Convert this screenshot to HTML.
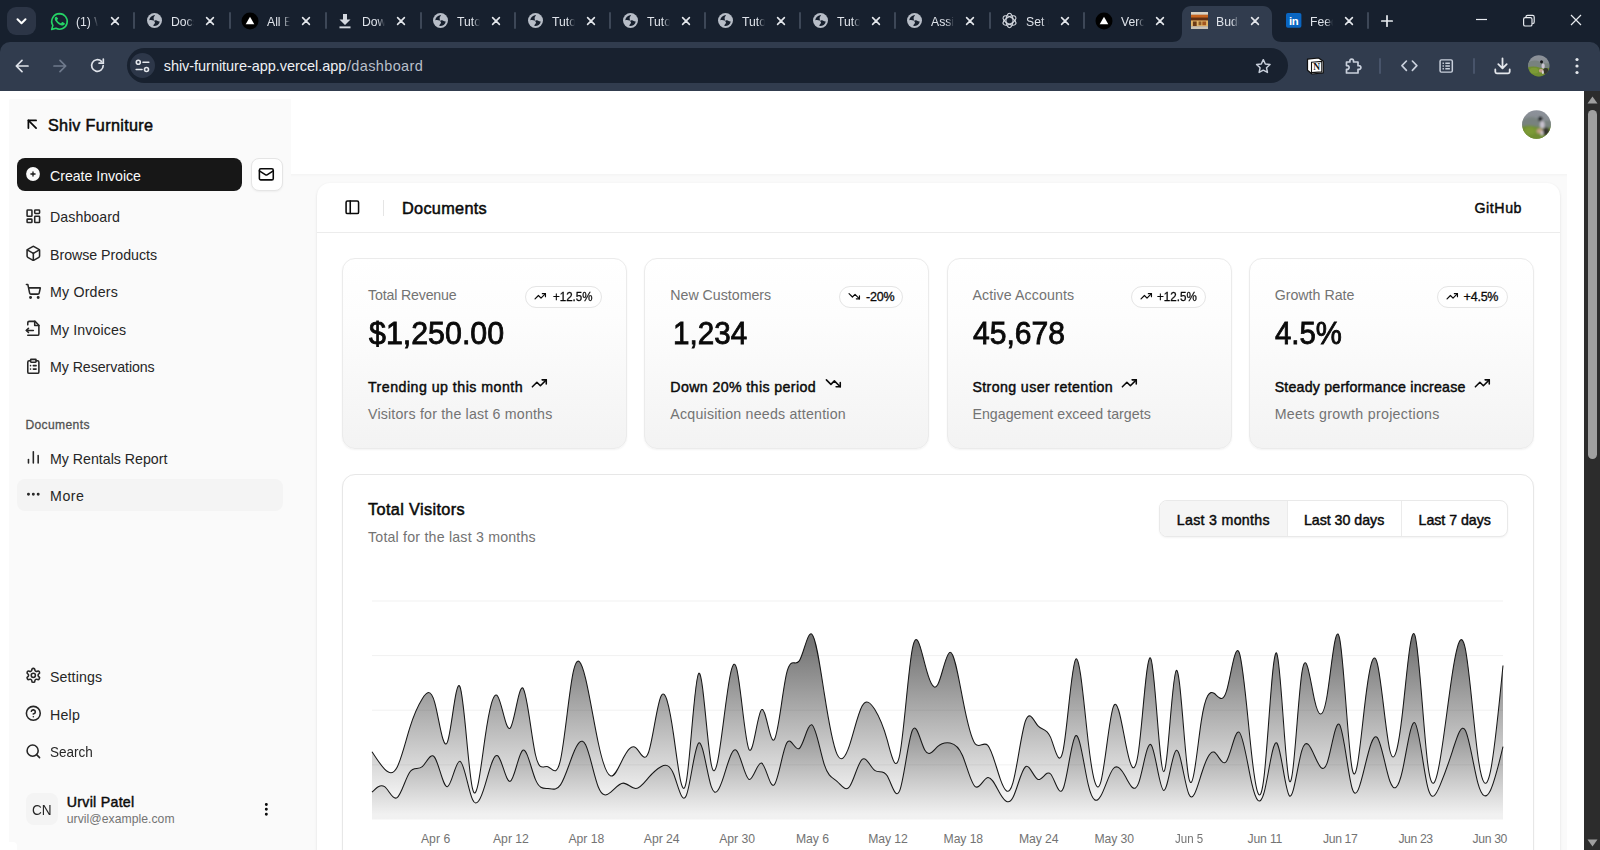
<!DOCTYPE html>
<html lang="en">
<head>
<meta charset="utf-8">
<title>Shiv Furniture - Dashboard</title>
<style>
*{box-sizing:border-box;margin:0;padding:0}
html,body{width:1600px;height:850px;overflow:hidden;background:#fff}
body{position:relative;font-family:"Liberation Sans",sans-serif;color:#0a0a0a;-webkit-font-smoothing:antialiased}
.abs{position:absolute}
.t{position:absolute;white-space:nowrap;line-height:1;transform-origin:0 0}
svg{position:absolute;overflow:visible}
/* ---------- browser chrome ---------- */
#strip{position:absolute;left:0;top:0;width:1600px;height:60px;background:#17202e}
#toolbar{position:absolute;left:0;top:41.500px;width:1600px;height:49px;background:#313c4e;border-radius:10px 10px 0 0}
#pill{position:absolute;left:127px;top:48px;width:1161px;height:35px;border-radius:18px;background:#18212f}
#pillbtn{position:absolute;left:130px;top:53px;width:25px;height:25px;border-radius:13px;background:#2d3749}
#tabsearch{position:absolute;left:7px;top:7px;width:29px;height:28px;border-radius:9px;background:#2c3546}
.tabsep{position:absolute;top:12px;width:2px;height:17px;border-radius:1px;background:#3d4757}
.tabtxt{position:absolute;top:13.500px;font-size:12.200px;line-height:16px;color:#dfe3ea;white-space:nowrap;overflow:hidden;width:23px;-webkit-mask-image:linear-gradient(90deg,#000 68%,transparent 100%);mask-image:linear-gradient(90deg,#000 68%,transparent 100%)}
.tsep{position:absolute;top:58px;width:2px;height:16px;border-radius:1px;background:#48546a}
.card{top:257.500px;width:285.300px;height:191.500px;border-radius:13px;border:1px solid #ebebeb;background:linear-gradient(180deg,#fff 0%,#fdfdfd 30%,#f3f3f3 100%);box-shadow:0 1px 2px rgba(0,0,0,.05)}
.badge{top:285.500px;height:22px;border-radius:11px;border:1px solid #e5e5e5;background:rgba(255,255,255,.6)}
</style>
</head>
<body>
<!-- browser chrome -->
<div id="strip"></div><div id="toolbar"></div>
<svg style="left:1172px;top:6px" width="110" height="36" viewBox="0 0 110 36"><path d="M0 36c6 0 10-3 10-10V9c0-5 3.500-9 9-9h72c5.500 0 9 4 9 9v17c0 7 4 10 10 10z" fill="#313c4e"/></svg>
<div id="tabsearch"></div><svg style="left:16px;top:18px" width="11" height="7" viewBox="0 0 11 7"><path d="M1.500 1.300l4 4 4-4" stroke="#fff" stroke-width="2" fill="none" stroke-linecap="round" stroke-linejoin="round"/></svg>
<svg style="left:49.500px;top:11.500px" width="19" height="19" viewBox="0 0 20 20"><path d="M10 1.700a8.200 8.200 0 0 0-7 12.400L1.800 18.300l4.400-1.100A8.200 8.200 0 1 0 10 1.700z" fill="none" stroke="#25d366" stroke-width="1.700" stroke-linejoin="round"/><path d="M7.300 5.600c-.3-.6-.5-.6-.8-.6-.7 0-1.500.8-1.500 2 0 1.300.9 2.500 1.100 2.700.1.200 1.800 2.900 4.500 3.900 2.200.9 2.600.7 3.100.6.500 0 1.500-.6 1.700-1.200.2-.6.200-1.100.2-1.200-.1-.1-.3-.2-.6-.3l-1.800-.9c-.3-.1-.5-.1-.7.200l-.8 1c-.1.200-.3.200-.6.100-.3-.2-1.100-.4-2.100-1.300-.8-.7-1.300-1.600-1.500-1.800-.1-.3 0-.4.100-.6l.5-.5c.1-.2.200-.3.300-.5.100-.2 0-.4 0-.5z" fill="#25d366"/></svg>
<div class="tabtxt" style="left:76px;width:22px">(1) W</div>
<svg style="left:110px;top:16px" width="10" height="10" viewBox="0 0 10 10"><path d="M1.600 1.600l6.800 6.800M8.400 1.600l-6.800 6.800" stroke="#e4e7ec" stroke-width="1.600" stroke-linecap="round" fill="none"/></svg>
<div class="tabsep" style="left:133px"></div>
<svg style="left:146.6px;top:13.2px" width="15" height="15" viewBox="0 0 15 15"><circle cx="7.500" cy="7.500" r="7.500" fill="#b7bdc7"/><path d="M7.900 2C5.400 2.200 2.700 4 2.200 7.300c1.700-.700 3.200-.300 4.500.400.700-1.100-.400-2.100 0-3.300.300-.900 1.200-1.500 1.200-2.400zM6.900 7.900c1.500 1 1.300 2.200.400 3-.700.700-1.100 1.400-.800 2.100 2.600.400 5.700-1.400 6.300-4.600-1.400.200-2.400-.200-3.100-.800-.800-.600-2-.400-2.800.300z" fill="#17202e"/></svg>
<div class="tabtxt" style="left:171px;width:23px">Docs</div>
<svg style="left:205px;top:16px" width="10" height="10" viewBox="0 0 10 10"><path d="M1.600 1.600l6.800 6.800M8.400 1.600l-6.800 6.800" stroke="#e4e7ec" stroke-width="1.600" stroke-linecap="round" fill="none"/></svg>
<svg style="left:241px;top:12px" width="18" height="18" viewBox="0 0 18 18"><circle cx="9" cy="9" r="8.500" fill="#000"/><path d="M9 4.800l4.300 7.400H4.700z" fill="#fff"/></svg>
<div class="tabtxt" style="left:267px;width:23px">All Ev</div>
<svg style="left:301px;top:16px" width="10" height="10" viewBox="0 0 10 10"><path d="M1.600 1.600l6.800 6.800M8.400 1.600l-6.800 6.800" stroke="#e4e7ec" stroke-width="1.600" stroke-linecap="round" fill="none"/></svg>
<svg style="left:338px;top:13px" width="14" height="16" viewBox="0 0 14 16"><path d="M5 1h4v5.500h3.500L7 12 1.500 6.500H5z" fill="#d5d9e0"/><rect x="1.500" y="13.400" width="11" height="1.900" fill="#d5d9e0"/></svg>
<div class="tabtxt" style="left:362px;width:23px">Down</div>
<svg style="left:396px;top:16px" width="10" height="10" viewBox="0 0 10 10"><path d="M1.600 1.600l6.800 6.800M8.400 1.600l-6.800 6.800" stroke="#e4e7ec" stroke-width="1.600" stroke-linecap="round" fill="none"/></svg>
<svg style="left:432.6px;top:13.2px" width="15" height="15" viewBox="0 0 15 15"><circle cx="7.500" cy="7.500" r="7.500" fill="#b7bdc7"/><path d="M7.900 2C5.400 2.200 2.700 4 2.200 7.300c1.700-.700 3.200-.300 4.500.400.700-1.100-.400-2.100 0-3.300.300-.900 1.200-1.500 1.200-2.400zM6.900 7.900c1.500 1 1.300 2.200.400 3-.700.700-1.100 1.400-.800 2.100 2.600.400 5.700-1.400 6.300-4.600-1.400.200-2.400-.200-3.100-.800-.800-.600-2-.400-2.800.300z" fill="#17202e"/></svg>
<div class="tabtxt" style="left:457px;width:23px">Tuto</div>
<svg style="left:491px;top:16px" width="10" height="10" viewBox="0 0 10 10"><path d="M1.600 1.600l6.800 6.800M8.400 1.600l-6.800 6.800" stroke="#e4e7ec" stroke-width="1.600" stroke-linecap="round" fill="none"/></svg>
<svg style="left:527.6px;top:13.2px" width="15" height="15" viewBox="0 0 15 15"><circle cx="7.500" cy="7.500" r="7.500" fill="#b7bdc7"/><path d="M7.900 2C5.400 2.200 2.700 4 2.200 7.300c1.700-.700 3.200-.300 4.500.400.700-1.100-.400-2.100 0-3.300.300-.900 1.200-1.500 1.200-2.400zM6.900 7.900c1.500 1 1.300 2.200.400 3-.700.700-1.100 1.400-.800 2.100 2.600.400 5.700-1.400 6.300-4.600-1.400.200-2.400-.200-3.100-.800-.800-.600-2-.400-2.800.300z" fill="#17202e"/></svg>
<div class="tabtxt" style="left:552px;width:23px">Tuto</div>
<svg style="left:586px;top:16px" width="10" height="10" viewBox="0 0 10 10"><path d="M1.600 1.600l6.800 6.800M8.400 1.600l-6.800 6.800" stroke="#e4e7ec" stroke-width="1.600" stroke-linecap="round" fill="none"/></svg>
<svg style="left:622.6px;top:13.2px" width="15" height="15" viewBox="0 0 15 15"><circle cx="7.500" cy="7.500" r="7.500" fill="#b7bdc7"/><path d="M7.900 2C5.400 2.200 2.700 4 2.200 7.300c1.700-.700 3.200-.300 4.500.400.700-1.100-.400-2.100 0-3.300.300-.900 1.200-1.500 1.200-2.400zM6.900 7.900c1.500 1 1.300 2.200.400 3-.700.700-1.100 1.400-.800 2.100 2.600.400 5.700-1.400 6.300-4.600-1.400.200-2.400-.200-3.100-.800-.800-.600-2-.400-2.800.300z" fill="#17202e"/></svg>
<div class="tabtxt" style="left:647px;width:23px">Tuto</div>
<svg style="left:681px;top:16px" width="10" height="10" viewBox="0 0 10 10"><path d="M1.600 1.600l6.800 6.800M8.400 1.600l-6.800 6.800" stroke="#e4e7ec" stroke-width="1.600" stroke-linecap="round" fill="none"/></svg>
<svg style="left:717.6px;top:13.2px" width="15" height="15" viewBox="0 0 15 15"><circle cx="7.500" cy="7.500" r="7.500" fill="#b7bdc7"/><path d="M7.900 2C5.400 2.200 2.700 4 2.200 7.300c1.700-.700 3.200-.300 4.500.400.700-1.100-.400-2.100 0-3.300.300-.900 1.200-1.500 1.200-2.400zM6.900 7.900c1.500 1 1.300 2.200.400 3-.700.700-1.100 1.400-.800 2.100 2.600.400 5.700-1.400 6.300-4.600-1.400.200-2.400-.200-3.100-.800-.800-.600-2-.400-2.800.300z" fill="#17202e"/></svg>
<div class="tabtxt" style="left:742px;width:23px">Tuto</div>
<svg style="left:776px;top:16px" width="10" height="10" viewBox="0 0 10 10"><path d="M1.600 1.600l6.800 6.800M8.400 1.600l-6.800 6.800" stroke="#e4e7ec" stroke-width="1.600" stroke-linecap="round" fill="none"/></svg>
<svg style="left:812.6px;top:13.2px" width="15" height="15" viewBox="0 0 15 15"><circle cx="7.500" cy="7.500" r="7.500" fill="#b7bdc7"/><path d="M7.900 2C5.400 2.200 2.700 4 2.200 7.300c1.700-.700 3.200-.300 4.500.400.700-1.100-.400-2.100 0-3.300.300-.900 1.200-1.500 1.200-2.400zM6.900 7.900c1.500 1 1.300 2.200.400 3-.700.700-1.100 1.400-.800 2.100 2.600.400 5.700-1.400 6.300-4.600-1.400.200-2.400-.200-3.100-.800-.800-.600-2-.400-2.800.300z" fill="#17202e"/></svg>
<div class="tabtxt" style="left:837px;width:23px">Tuto</div>
<svg style="left:871px;top:16px" width="10" height="10" viewBox="0 0 10 10"><path d="M1.600 1.600l6.800 6.800M8.400 1.600l-6.800 6.800" stroke="#e4e7ec" stroke-width="1.600" stroke-linecap="round" fill="none"/></svg>
<svg style="left:906.6px;top:13.2px" width="15" height="15" viewBox="0 0 15 15"><circle cx="7.500" cy="7.500" r="7.500" fill="#b7bdc7"/><path d="M7.900 2C5.400 2.200 2.700 4 2.200 7.300c1.700-.700 3.200-.300 4.500.400.700-1.100-.400-2.100 0-3.300.300-.900 1.200-1.500 1.200-2.400zM6.900 7.900c1.500 1 1.300 2.200.400 3-.700.700-1.100 1.400-.800 2.100 2.600.400 5.700-1.400 6.300-4.600-1.400.200-2.400-.200-3.100-.800-.800-.600-2-.400-2.800.300z" fill="#17202e"/></svg>
<div class="tabtxt" style="left:931px;width:23px">Assig</div>
<svg style="left:965px;top:16px" width="10" height="10" viewBox="0 0 10 10"><path d="M1.600 1.600l6.800 6.800M8.400 1.600l-6.800 6.800" stroke="#e4e7ec" stroke-width="1.600" stroke-linecap="round" fill="none"/></svg>
<svg style="left:1000.5px;top:12.300px" width="17" height="17" viewBox="0 0 18 18" fill="none" stroke="#d5d9e0" stroke-width="1.150"><ellipse cx="9" cy="9" rx="7.600" ry="3.700" transform="rotate(30 9 9)"/><ellipse cx="9" cy="9" rx="7.600" ry="3.700" transform="rotate(90 9 9)"/><ellipse cx="9" cy="9" rx="7.600" ry="3.700" transform="rotate(150 9 9)"/></svg>
<div class="tabtxt" style="left:1026px;width:23px">Set up</div>
<svg style="left:1060px;top:16px" width="10" height="10" viewBox="0 0 10 10"><path d="M1.600 1.600l6.800 6.800M8.400 1.600l-6.800 6.800" stroke="#e4e7ec" stroke-width="1.600" stroke-linecap="round" fill="none"/></svg>
<svg style="left:1095px;top:12px" width="18" height="18" viewBox="0 0 18 18"><circle cx="9" cy="9" r="8.500" fill="#000"/><path d="M9 4.800l4.300 7.400H4.700z" fill="#fff"/></svg>
<div class="tabtxt" style="left:1121px;width:23px">Verce</div>
<svg style="left:1155px;top:16px" width="10" height="10" viewBox="0 0 10 10"><path d="M1.600 1.600l6.800 6.800M8.400 1.600l-6.800 6.800" stroke="#e4e7ec" stroke-width="1.600" stroke-linecap="round" fill="none"/></svg>
<svg style="left:1190.5px;top:12.200px" width="17" height="17" viewBox="0 0 18 18"><rect x="0" y="0" width="18" height="18" fill="#8a4b22"/><rect x="0" y="0" width="18" height="3" fill="#d9d2c4"/><rect x="0" y="3" width="18" height="3" fill="#c8641e"/><rect x="0" y="6" width="18" height="3" fill="#5e2f14"/><rect x="0" y="9" width="18" height="6" fill="#e2b66a"/><rect x="2" y="10" width="4" height="5" fill="#6b3a17"/><rect x="8" y="10" width="3" height="4" fill="#8c5a2a"/><rect x="12" y="10" width="4" height="4" fill="#a2551f"/><rect x="0" y="15" width="18" height="3" fill="#c9c2b6"/></svg>
<div class="tabtxt" style="left:1216px;width:23px">Budg</div>
<svg style="left:1250px;top:16px" width="10" height="10" viewBox="0 0 10 10"><path d="M1.600 1.600l6.800 6.800M8.400 1.600l-6.800 6.800" stroke="#e4e7ec" stroke-width="1.600" stroke-linecap="round" fill="none"/></svg>
<svg style="left:1285.7px;top:13.400px" width="15.400" height="14.800" viewBox="0 0 17 17" preserveAspectRatio="none"><rect width="17" height="17" rx="2" fill="#0a66c2"/><text x="8.500" y="13.600" text-anchor="middle" font-family="Liberation Sans, sans-serif" font-weight="700" font-size="12.500" fill="#fff" letter-spacing="-0.300">in</text></svg>
<div class="tabtxt" style="left:1310px;width:23px">Feed</div>
<svg style="left:1344px;top:16px" width="10" height="10" viewBox="0 0 10 10"><path d="M1.600 1.600l6.800 6.800M8.400 1.600l-6.800 6.800" stroke="#e4e7ec" stroke-width="1.600" stroke-linecap="round" fill="none"/></svg>
<div class="tabsep" style="left:229px"></div>
<div class="tabsep" style="left:325px"></div>
<div class="tabsep" style="left:420px"></div>
<div class="tabsep" style="left:514px"></div>
<div class="tabsep" style="left:609px"></div>
<div class="tabsep" style="left:704px"></div>
<div class="tabsep" style="left:799px"></div>
<div class="tabsep" style="left:894px"></div>
<div class="tabsep" style="left:989px"></div>
<div class="tabsep" style="left:1083px"></div>
<div class="tabsep" style="left:1367px"></div>
<svg style="left:1381px;top:15px" width="12" height="12" viewBox="0 0 12 12"><path d="M6 .800v10.400M.800 6h10.400" stroke="#e8ebf0" stroke-width="1.700" stroke-linecap="round"/></svg>
<svg style="left:1476px;top:14px" width="110" height="14" viewBox="0 0 110 14" fill="none" stroke="#e8ebf0" stroke-width="1.200"><path d="M0 5.500h11"/><rect x="47.600" y="3.600" width="8.400" height="8.400" rx="1.600"/><path d="M50 3.400V2.900c0-1 .600-1.600 1.600-1.600h5c1 0 1.600.6 1.600 1.600v5c0 1-.6 1.600-1.600 1.600h-.4"/><path d="M95 1l10 10M105 1L95 11"/></svg>
<svg style="left:14px;top:58px" width="16" height="16" viewBox="0 0 16 16" fill="none" stroke="#dfe3ea" stroke-width="1.700" stroke-linecap="round" stroke-linejoin="round"><path d="M14 8H2.500M8 2.300L2.300 8 8 13.700"/></svg>
<svg style="left:52px;top:58px" width="16" height="16" viewBox="0 0 16 16" fill="none" stroke="#6f7a8c" stroke-width="1.700" stroke-linecap="round" stroke-linejoin="round"><path d="M2 8h11.500M8 2.300L13.700 8 8 13.700"/></svg>
<svg style="left:89px;top:57px" width="17" height="17" viewBox="0 0 17 17" fill="none" stroke="#dfe3ea" stroke-width="1.700" stroke-linecap="round" stroke-linejoin="round"><path d="M14.200 8.500a5.800 5.800 0 1 1-1.700-4.100"/><path d="M14.300 2v4.200h-4.200" stroke-linejoin="miter"/></svg>
<div id="pill"></div><div id="pillbtn"></div>
<svg style="left:135px;top:59px" width="15" height="14" viewBox="0 0 15 14" fill="none" stroke="#e4e7ec" stroke-width="1.600" stroke-linecap="round"><circle cx="3.300" cy="3.300" r="2"/><path d="M8 3.300h5.800"/><circle cx="11.500" cy="10.500" r="2"/><path d="M1.200 10.500H7"/></svg>
<svg style="left:1254.900px;top:57.800px" width="16.600" height="16.600" viewBox="0 0 18 18" fill="none" stroke="#c9d0dc" stroke-width="1.600" stroke-linejoin="round"><path d="M9 1.800l2.200 4.700 5.100.6-3.800 3.500 1 5.100L9 13.200l-4.500 2.500 1-5.100-3.800-3.500 5.100-.6z"/></svg>
<svg style="left:1306px;top:57px" width="19" height="18" viewBox="0 0 19 18"><path d="M1.500 2.200L12.500 1l4.800 3.200v11.600L6 17l-4.500-3.800z" fill="#fff" stroke="#111" stroke-width="1.200" stroke-linejoin="round"/><path d="M5.500 5.200L15.800 4.400v10.500L5.500 15.600z" fill="#fff" stroke="#111" stroke-width="1.100"/><text x="10.700" y="13.300" text-anchor="middle" font-family="Liberation Serif, serif" font-weight="700" font-size="9.500" fill="#111">N</text></svg>
<svg style="left:1343.500px;top:56.700px" width="19" height="18" viewBox="0 0 19 18" fill="none" stroke="#c9d0dc" stroke-width="1.700" stroke-linejoin="round"><path d="M2.500 5h3.400c-.300-1.900.500-2.900 1.800-2.900s2.100 1 1.800 2.900h4.500v3.700c1.900-.300 2.900.500 2.900 1.800s-1 2.100-2.900 1.800V16H2.500v-3.700c1.700.300 2.600-.500 2.600-1.800s-.900-2.100-2.600-1.800z"/></svg>
<div class="tsep" style="left:1379px"></div><div class="tsep" style="left:1473px"></div>
<svg style="left:1400.500px;top:60.300px" width="16.800" height="11.400" viewBox="0 0 18 12" fill="none" stroke="#c9d0dc" stroke-width="1.800" stroke-linecap="round" stroke-linejoin="round"><path d="M5.800 1L1 6l4.800 5M12.200 1L17 6l-4.800 5"/></svg>
<svg style="left:1439px;top:59px" width="14.400" height="14" viewBox="0 0 16 16" fill="none" stroke="#c9d0dc" stroke-width="1.700"><rect x="1" y="1" width="14" height="14" rx="1.500"/><path d="M3.800 4.800h1.600M7 4.800h5.200M3.800 8h1.600M7 8h5.200M3.800 11.200h1.600M7 11.200h5.200" stroke-width="1.700"/></svg>
<svg style="left:1494px;top:57px" width="17" height="18" viewBox="0 0 17 18" fill="none" stroke="#e4e7ec" stroke-width="1.800" stroke-linecap="round" stroke-linejoin="round"><path d="M8.500 1.500v9.500M4.300 7.200l4.200 4.200 4.200-4.200M1.300 12.500v2.300c0 .9.600 1.500 1.500 1.500h11.400c.9 0 1.500-.6 1.500-1.500v-2.300"/></svg>
<svg style="left:1528.2px;top:55.2px" width="21.6" height="21.6" viewBox="0 0 29 29"><defs><clipPath id="tavc"><circle cx="14.500" cy="14.500" r="14.300"/></clipPath><linearGradient id="tavg" x1="0" y1="0" x2="0" y2="1"><stop offset="0" stop-color="#8d929b"/><stop offset=".35" stop-color="#878d92"/><stop offset=".5" stop-color="#7b857c"/><stop offset=".62" stop-color="#6f8a33"/><stop offset="1" stop-color="#64802a"/></linearGradient><filter id="tavb" x="-20%" y="-20%" width="140%" height="140%"><feGaussianBlur stdDeviation=".9"/></filter></defs><g clip-path="url(#tavc)"><rect width="29" height="29" fill="url(#tavg)"/><g filter="url(#tavb)"><path d="M-2 12C4 7 10 6 16 9s10 3 15 1v8H-2z" fill="#78827f"/><path d="M-2 17c6-2 12-2 18 0 5 1.500 9 1 14 0v14H-2z" fill="#6f8d30"/><ellipse cx="8" cy="21" rx="6" ry="4" fill="#7c9a36"/><ellipse cx="24" cy="21.500" rx="3.600" ry="4" fill="#34352f"/><ellipse cx="20.300" cy="14.800" rx="2.200" ry="3.800" fill="#cbc4d2"/><ellipse cx="17.600" cy="21" rx="3" ry="2.600" fill="#c2a088"/><ellipse cx="20" cy="23" rx="1.300" ry="2.600" fill="#d8d0d4"/><ellipse cx="18.200" cy="9.200" rx="2" ry="2.100" fill="#17171b"/></g></g></svg>
<svg style="left:1575px;top:57px" width="4" height="18" viewBox="0 0 4 18" fill="#e4e7ec"><circle cx="2" cy="2.500" r="1.600"/><circle cx="2" cy="9" r="1.600"/><circle cx="2" cy="15.500" r="1.600"/></svg>
<!-- page -->
<div class="abs" style="left:9px;top:99px;width:282px;height:90px;background:#fafafa;border-radius:2px 0 0 0"></div>
<div class="abs" style="left:9px;top:174px;width:1558px;height:680px;background:#fafafa;box-shadow:inset 0 3px 3px -2px rgba(0,0,0,.035)"></div>
<div class="abs" style="left:9px;top:174px;width:282px;height:8px;background:#fafafa"></div>
<div class="abs" style="left:317px;top:182.500px;width:1242.500px;height:700px;background:#fff;border-radius:13px;box-shadow:0 1px 3px rgba(0,0,0,.10),0 1px 2px -1px rgba(0,0,0,.10)"></div>
<div class="abs" style="left:317px;top:231.500px;width:1242.500px;height:1px;background:#ececec"></div>
<svg style="left:1521.8px;top:109.9px" width="29" height="29" viewBox="0 0 29 29"><defs><clipPath id="pavc"><circle cx="14.500" cy="14.500" r="14.300"/></clipPath><linearGradient id="pavg" x1="0" y1="0" x2="0" y2="1"><stop offset="0" stop-color="#8d929b"/><stop offset=".35" stop-color="#878d92"/><stop offset=".5" stop-color="#7b857c"/><stop offset=".62" stop-color="#6f8a33"/><stop offset="1" stop-color="#64802a"/></linearGradient><filter id="pavb" x="-20%" y="-20%" width="140%" height="140%"><feGaussianBlur stdDeviation=".9"/></filter></defs><g clip-path="url(#pavc)"><rect width="29" height="29" fill="url(#pavg)"/><g filter="url(#pavb)"><path d="M-2 12C4 7 10 6 16 9s10 3 15 1v8H-2z" fill="#78827f"/><path d="M-2 17c6-2 12-2 18 0 5 1.500 9 1 14 0v14H-2z" fill="#6f8d30"/><ellipse cx="8" cy="21" rx="6" ry="4" fill="#7c9a36"/><ellipse cx="24" cy="21.500" rx="3.600" ry="4" fill="#34352f"/><ellipse cx="20.300" cy="14.800" rx="2.200" ry="3.800" fill="#cbc4d2"/><ellipse cx="17.600" cy="21" rx="3" ry="2.600" fill="#c2a088"/><ellipse cx="20" cy="23" rx="1.300" ry="2.600" fill="#d8d0d4"/><ellipse cx="18.200" cy="9.200" rx="2" ry="2.100" fill="#17171b"/></g></g></svg>
<div class="abs" style="left:1584.200px;top:90.500px;width:15.800px;height:760px;background:#2c2c2c"></div>
<div class="abs" style="left:1587.500px;top:110px;width:9.500px;height:349px;border-radius:5px;background:#9f9f9f"></div>
<svg style="left:1587px;top:96px" width="11" height="8" viewBox="0 0 11 8"><path d="M5.500 .500L10.500 7.500H.500z" fill="#9f9f9f"/></svg>
<svg style="left:1587px;top:838.500px" width="11" height="8" viewBox="0 0 11 8"><path d="M5.500 7.500L10.500 .500H.500z" fill="#9f9f9f"/></svg>
<div class="abs" style="left:8px;top:841.500px;width:8.500px;height:9px;background:#fff;border-radius:0 4px 0 0"></div>
<div class="abs" style="left:17px;top:157.500px;width:224.700px;height:33.300px;border-radius:8px;background:#171717"></div>
<div class="abs" style="left:250.500px;top:158px;width:32.500px;height:32.500px;border-radius:8px;background:#fff;border:1px solid #e5e5e5;box-shadow:0 1px 2px rgba(0,0,0,.05)"></div>
<div class="abs" style="left:17px;top:478.700px;width:265.700px;height:32.500px;border-radius:8px;background:#f4f4f4"></div>
<div class="abs" style="left:25.500px;top:792.700px;width:32.500px;height:32.500px;border-radius:8px;background:#f4f4f4"></div>
<div class="abs card" style="left:342px"></div>
<div class="abs card" style="left:644.2px"></div>
<div class="abs card" style="left:946.6px"></div>
<div class="abs card" style="left:1248.6px"></div>
<div class="abs badge" style="left:525px;width:76.7px"></div>
<div class="abs badge" style="left:839.1px;width:64.4px"></div>
<div class="abs badge" style="left:1130.6px;width:75.1px"></div>
<div class="abs badge" style="left:1436.8px;width:71.2px"></div>
<div class="abs" style="left:342px;top:473.700px;width:1192px;height:400px;border-radius:13px;background:#fff;border:1px solid #e7e7e7;box-shadow:0 1px 2px rgba(0,0,0,.05)"></div>
<div class="abs" style="left:1159.300px;top:500.400px;width:348.700px;height:37px;border-radius:8px;background:#fff;border:1px solid #e9e9e9;box-shadow:0 1px 2px rgba(0,0,0,.05);overflow:hidden"><div style="position:absolute;left:0;top:0;width:127.600px;height:100%;background:#f5f5f5;border-right:1px solid #ebebeb"></div><div style="position:absolute;left:241.100px;top:0;width:1px;height:100%;background:#ebebeb"></div></div>
<div class="t" style="left:163.7px;top:59.0px;font-size:14.5px;font-weight:400;color:#eef0f4;letter-spacing:-0.042px">shiv-furniture-app.vercel.app</div>
<div class="t" style="left:346.9px;top:59.0px;font-size:14.5px;font-weight:400;color:#b9bfca;letter-spacing:0.371px">/dashboard</div>
<div class="t" style="left:48.0px;top:117.1px;font-size:16.2px;font-weight:400;color:#0a0a0a;-webkit-text-stroke:0.50px #0a0a0a;letter-spacing:0.326px">Shiv Furniture</div>
<div class="t" style="left:50.0px;top:168.8px;font-size:14.2px;font-weight:400;color:#fafafa;letter-spacing:-0.037px">Create Invoice</div>
<div class="t" style="left:50.0px;top:210.0px;font-size:14.2px;font-weight:400;color:#262626;letter-spacing:0.072px">Dashboard</div>
<div class="t" style="left:50.0px;top:247.5px;font-size:14.2px;font-weight:400;color:#262626;letter-spacing:-0.018px">Browse Products</div>
<div class="t" style="left:50.0px;top:285.0px;font-size:14.2px;font-weight:400;color:#262626;letter-spacing:0.198px">My Orders</div>
<div class="t" style="left:50.0px;top:322.5px;font-size:14.2px;font-weight:400;color:#262626;letter-spacing:0.109px">My Invoices</div>
<div class="t" style="left:50.0px;top:360.0px;font-size:14.2px;font-weight:400;color:#262626;letter-spacing:-0.068px">My Reservations</div>
<div class="t" style="left:25.4px;top:418.8px;font-size:12.1px;font-weight:400;color:#525252;-webkit-text-stroke:0.29px #525252;letter-spacing:0.366px">Documents</div>
<div class="t" style="left:50.0px;top:451.5px;font-size:14.2px;font-weight:400;color:#262626;letter-spacing:-0.005px">My Rentals Report</div>
<div class="t" style="left:50.0px;top:488.9px;font-size:14.2px;font-weight:400;color:#262626;letter-spacing:0.557px">More</div>
<div class="t" style="left:50.0px;top:670.3px;font-size:14.2px;font-weight:400;color:#262626;letter-spacing:0.105px">Settings</div>
<div class="t" style="left:50.0px;top:707.7px;font-size:14.2px;font-weight:400;color:#262626;letter-spacing:0.204px">Help</div>
<div class="t" style="left:50.0px;top:745.1px;font-size:14.2px;font-weight:400;color:#262626;transform:scaleX(0.9521)">Search</div>
<div class="t" style="left:31.7px;top:803.4px;font-size:14.2px;font-weight:400;color:#262626;transform:scaleX(0.9610)">CN</div>
<div class="t" style="left:66.8px;top:794.7px;font-size:14.2px;font-weight:400;color:#0a0a0a;-webkit-text-stroke:0.44px #0a0a0a;letter-spacing:0.274px">Urvil Patel</div>
<div class="t" style="left:66.8px;top:812.7px;font-size:12.2px;font-weight:400;color:#737373;letter-spacing:0.037px">urvil@example.com</div>
<div class="t" style="left:402.0px;top:200.1px;font-size:16.3px;font-weight:400;color:#0a0a0a;-webkit-text-stroke:0.51px #0a0a0a;letter-spacing:0.293px">Documents</div>
<div class="t" style="left:1474.5px;top:201.4px;font-size:14.2px;font-weight:400;color:#0a0a0a;-webkit-text-stroke:0.44px #0a0a0a;letter-spacing:0.569px">GitHub</div>
<div class="t" style="left:368.0px;top:287.5px;font-size:14.2px;font-weight:400;color:#737373;letter-spacing:-0.167px">Total Revenue</div>
<div class="t" style="left:552.5px;top:291.3px;font-size:12.5px;font-weight:400;color:#0a0a0a;-webkit-text-stroke:0.30px #0a0a0a;transform:scaleX(0.9240)">+12.5%</div>
<div class="t" style="left:368.6px;top:317.7px;font-size:31.1px;font-weight:400;color:#0a0a0a;-webkit-text-stroke:0.84px #0a0a0a;transform:scaleX(0.9767)">$1,250.00</div>
<div class="t" style="left:368.0px;top:379.6px;font-size:14.2px;font-weight:400;color:#0a0a0a;-webkit-text-stroke:0.44px #0a0a0a;letter-spacing:0.476px">Trending up this month</div>
<div class="t" style="left:368.0px;top:406.9px;font-size:14.2px;font-weight:400;color:#737373;letter-spacing:0.191px">Visitors for the last 6 months</div>
<div class="t" style="left:670.3px;top:287.5px;font-size:14.2px;font-weight:400;color:#737373;letter-spacing:-0.002px">New Customers</div>
<div class="t" style="left:866.0px;top:291.3px;font-size:12.5px;font-weight:400;color:#0a0a0a;-webkit-text-stroke:0.30px #0a0a0a;letter-spacing:-0.229px">-20%</div>
<div class="t" style="left:672.5px;top:317.7px;font-size:31.1px;font-weight:400;color:#0a0a0a;-webkit-text-stroke:0.84px #0a0a0a;transform:scaleX(0.9536)">1,234</div>
<div class="t" style="left:670.3px;top:379.6px;font-size:14.2px;font-weight:400;color:#0a0a0a;-webkit-text-stroke:0.44px #0a0a0a;letter-spacing:0.383px">Down 20% this period</div>
<div class="t" style="left:670.3px;top:406.9px;font-size:14.2px;font-weight:400;color:#737373;letter-spacing:0.224px">Acquisition needs attention</div>
<div class="t" style="left:972.4px;top:287.5px;font-size:14.2px;font-weight:400;color:#737373;letter-spacing:0.117px">Active Accounts</div>
<div class="t" style="left:1156.8px;top:291.3px;font-size:12.5px;font-weight:400;color:#0a0a0a;-webkit-text-stroke:0.30px #0a0a0a;transform:scaleX(0.9310)">+12.5%</div>
<div class="t" style="left:973.0px;top:317.7px;font-size:31.1px;font-weight:400;color:#0a0a0a;-webkit-text-stroke:0.84px #0a0a0a;transform:scaleX(0.9673)">45,678</div>
<div class="t" style="left:972.4px;top:379.6px;font-size:14.2px;font-weight:400;color:#0a0a0a;-webkit-text-stroke:0.44px #0a0a0a;letter-spacing:0.390px">Strong user retention</div>
<div class="t" style="left:972.4px;top:406.9px;font-size:14.2px;font-weight:400;color:#737373;letter-spacing:0.039px">Engagement exceed targets</div>
<div class="t" style="left:1274.7px;top:287.5px;font-size:14.2px;font-weight:400;color:#737373;letter-spacing:0.006px">Growth Rate</div>
<div class="t" style="left:1463.6px;top:291.3px;font-size:12.5px;font-weight:400;color:#0a0a0a;-webkit-text-stroke:0.30px #0a0a0a;letter-spacing:-0.224px">+4.5%</div>
<div class="t" style="left:1275.3px;top:317.7px;font-size:31.1px;font-weight:400;color:#0a0a0a;-webkit-text-stroke:0.84px #0a0a0a;transform:scaleX(0.9439)">4.5%</div>
<div class="t" style="left:1274.7px;top:379.6px;font-size:14.2px;font-weight:400;color:#0a0a0a;-webkit-text-stroke:0.44px #0a0a0a;letter-spacing:0.207px">Steady performance increase</div>
<div class="t" style="left:1274.7px;top:406.9px;font-size:14.2px;font-weight:400;color:#737373;letter-spacing:0.304px">Meets growth projections</div>
<div class="t" style="left:368.0px;top:501.0px;font-size:16.3px;font-weight:400;color:#0a0a0a;-webkit-text-stroke:0.51px #0a0a0a;letter-spacing:0.354px">Total Visitors</div>
<div class="t" style="left:368.0px;top:529.7px;font-size:14.2px;font-weight:400;color:#737373;letter-spacing:0.202px">Total for the last 3 months</div>
<div class="t" style="left:1176.8px;top:512.6px;font-size:14.2px;font-weight:400;color:#0a0a0a;-webkit-text-stroke:0.44px #0a0a0a;letter-spacing:0.306px">Last 3 months</div>
<div class="t" style="left:1303.9px;top:512.6px;font-size:14.2px;font-weight:400;color:#0a0a0a;-webkit-text-stroke:0.44px #0a0a0a;letter-spacing:-0.005px">Last 30 days</div>
<div class="t" style="left:1418.6px;top:512.6px;font-size:14.2px;font-weight:400;color:#0a0a0a;-webkit-text-stroke:0.44px #0a0a0a;letter-spacing:-0.036px">Last 7 days</div>
<div class="t" style="left:420.9px;top:832.9px;font-size:12.2px;font-weight:400;color:#737373;letter-spacing:0.040px">Apr 6</div>
<div class="t" style="left:493.0px;top:832.9px;font-size:12.2px;font-weight:400;color:#737373;letter-spacing:-0.014px">Apr 12</div>
<div class="t" style="left:568.4px;top:832.9px;font-size:12.2px;font-weight:400;color:#737373;letter-spacing:-0.014px">Apr 18</div>
<div class="t" style="left:643.8px;top:832.9px;font-size:12.2px;font-weight:400;color:#737373;letter-spacing:-0.014px">Apr 24</div>
<div class="t" style="left:719.2px;top:832.9px;font-size:12.2px;font-weight:400;color:#737373;letter-spacing:-0.014px">Apr 30</div>
<div class="t" style="left:796.0px;top:832.9px;font-size:12.2px;font-weight:400;color:#737373;letter-spacing:-0.051px">May 6</div>
<div class="t" style="left:868.2px;top:832.9px;font-size:12.2px;font-weight:400;color:#737373;letter-spacing:-0.084px">May 12</div>
<div class="t" style="left:943.6px;top:832.9px;font-size:12.2px;font-weight:400;color:#737373;letter-spacing:-0.084px">May 18</div>
<div class="t" style="left:1019.0px;top:832.9px;font-size:12.2px;font-weight:400;color:#737373;letter-spacing:-0.084px">May 24</div>
<div class="t" style="left:1094.4px;top:832.9px;font-size:12.2px;font-weight:400;color:#737373;letter-spacing:-0.084px">May 30</div>
<div class="t" style="left:1175.4px;top:832.9px;font-size:12.2px;font-weight:400;color:#737373;transform:scaleX(0.9454)">Jun 5</div>
<div class="t" style="left:1247.6px;top:832.9px;font-size:12.2px;font-weight:400;color:#737373;letter-spacing:-0.188px">Jun 11</div>
<div class="t" style="left:1323.0px;top:832.9px;font-size:12.2px;font-weight:400;color:#737373;letter-spacing:-0.369px">Jun 17</div>
<div class="t" style="left:1398.4px;top:832.9px;font-size:12.2px;font-weight:400;color:#737373;letter-spacing:-0.369px">Jun 23</div>
<div class="t" style="left:1472.6px;top:832.9px;font-size:12.2px;font-weight:400;color:#737373;letter-spacing:-0.369px">Jun 30</div>
<!-- icons -->
<svg style="left:22.55px;top:114.75px" width="18.5" height="18.5" viewBox="0 0 24 24" fill="none" stroke="#0a0a0a" stroke-width="2.25" stroke-linecap="round" stroke-linejoin="round"><path d="M7 17V7h10"/><path d="M17 17 7 7"/></svg>
<svg style="left:26.400px;top:167.300px" width="14" height="14" viewBox="0 0 14 14"><circle cx="7" cy="7" r="6.900" fill="#fafafa"/><path d="M7 4.900v4.200M4.900 7h4.200" stroke="#171717" stroke-width="1.300" stroke-linecap="round"/></svg>
<svg style="left:258.17px;top:165.86px" width="16.67" height="16.67" viewBox="0 0 24 24" fill="none" stroke="#0a0a0a" stroke-width="2.25" stroke-linecap="round" stroke-linejoin="round"><rect width="20" height="16" x="2" y="4" rx="2"/><path d="m22 7-8.970 5.700a1.940 1.940 0 0 1-2.060 0L2 7"/></svg>
<svg style="left:24.96px;top:207.81px" width="16.67" height="16.67" viewBox="0 0 24 24" fill="none" stroke="#262626" stroke-width="2.25" stroke-linecap="round" stroke-linejoin="round"><rect width="7" height="9" x="3" y="3" rx="1"/><rect width="7" height="5" x="14" y="3" rx="1"/><rect width="7" height="9" x="14" y="12" rx="1"/><rect width="7" height="5" x="3" y="16" rx="1"/></svg>
<svg style="left:24.96px;top:245.31px" width="16.67" height="16.67" viewBox="0 0 24 24" fill="none" stroke="#262626" stroke-width="2.25" stroke-linecap="round" stroke-linejoin="round"><path d="M21 8a2 2 0 0 0-1-1.730l-7-4a2 2 0 0 0-2 0l-7 4A2 2 0 0 0 3 8v8a2 2 0 0 0 1 1.730l7 4a2 2 0 0 0 2 0l7-4A2 2 0 0 0 21 16Z"/><path d="m3.300 7 8.700 5 8.700-5"/><path d="M12 22V12"/></svg>
<svg style="left:24.96px;top:282.81px" width="16.67" height="16.67" viewBox="0 0 24 24" fill="none" stroke="#262626" stroke-width="2.25" stroke-linecap="round" stroke-linejoin="round"><circle cx="8" cy="21" r="1"/><circle cx="19" cy="21" r="1"/><path d="M2.050 2.050h2l2.660 12.420a2 2 0 0 0 2 1.580h9.780a2 2 0 0 0 1.950-1.570l1.650-7.430H5.120"/></svg>
<svg style="left:24.96px;top:320.31px" width="16.67" height="16.67" viewBox="0 0 24 24" fill="none" stroke="#262626" stroke-width="2.25" stroke-linecap="round" stroke-linejoin="round"><path d="M4 7V4a2 2 0 0 1 2-2h8.500L20 7.500V20a2 2 0 0 1-2 2H4"/><polyline points="14 2 14 8 20 8"/><path d="M2 15h10"/><path d="m5 12-3 3 3 3"/></svg>
<svg style="left:24.96px;top:357.81px" width="16.67" height="16.67" viewBox="0 0 24 24" fill="none" stroke="#262626" stroke-width="2.25" stroke-linecap="round" stroke-linejoin="round"><rect width="8" height="4" x="8" y="2" rx="1" ry="1"/><path d="M16 4h2a2 2 0 0 1 2 2v14a2 2 0 0 1-2 2H6a2 2 0 0 1-2-2V6a2 2 0 0 1 2-2h2"/><path d="M12 11h4"/><path d="M12 16h4"/><path d="M8 11h.01"/><path d="M8 16h.01"/></svg>
<svg style="left:24.96px;top:448.81px" width="16.67" height="16.67" viewBox="0 0 24 24" fill="none" stroke="#262626" stroke-width="2.25" stroke-linecap="round" stroke-linejoin="round"><path d="M5 20v-5"/><path d="M12 20V4"/><path d="M19 20V9.500"/></svg>
<svg style="left:24.96px;top:486.31px" width="16.67" height="16.67" viewBox="0 0 24 24" fill="none" stroke="#262626" stroke-width="2.25" stroke-linecap="round" stroke-linejoin="round" ><circle cx="5" cy="12" r="1"/><circle cx="12" cy="12" r="1"/><circle cx="19" cy="12" r="1"/></svg>
<svg style="left:24.96px;top:667.37px" width="16.67" height="16.67" viewBox="0 0 24 24" fill="none" stroke="#262626" stroke-width="2.25" stroke-linecap="round" stroke-linejoin="round"><path d="M12.220 2h-.440a2 2 0 0 0-2 2v.180a2 2 0 0 1-1 1.730l-.430.250a2 2 0 0 1-2 0l-.150-.080a2 2 0 0 0-2.730.730l-.220.380a2 2 0 0 0 .730 2.730l.150.100a2 2 0 0 1 1 1.720v.510a2 2 0 0 1-1 1.740l-.150.090a2 2 0 0 0-.730 2.730l.220.380a2 2 0 0 0 2.730.730l.150-.080a2 2 0 0 1 2 0l.430.250a2 2 0 0 1 1 1.730V20a2 2 0 0 0 2 2h.440a2 2 0 0 0 2-2v-.180a2 2 0 0 1 1-1.730l.430-.250a2 2 0 0 1 2 0l.150.080a2 2 0 0 0 2.730-.730l.220-.390a2 2 0 0 0-.730-2.730l-.150-.080a2 2 0 0 1-1-1.740v-.500a2 2 0 0 1 1-1.740l.150-.090a2 2 0 0 0 .730-2.730l-.220-.380a2 2 0 0 0-2.730-.730l-.150.080a2 2 0 0 1-2 0l-.430-.250a2 2 0 0 1-1-1.730V4a2 2 0 0 0-2-2z"/><circle cx="12" cy="12" r="3"/></svg>
<svg style="left:24.96px;top:704.87px" width="16.67" height="16.67" viewBox="0 0 24 24" fill="none" stroke="#262626" stroke-width="2.25" stroke-linecap="round" stroke-linejoin="round"><circle cx="12" cy="12" r="10"/><path d="M9.090 9a3 3 0 0 1 5.830 1c0 2-3 3-3 3"/><path d="M12 17h.01"/></svg>
<svg style="left:24.96px;top:742.56px" width="16.67" height="16.67" viewBox="0 0 24 24" fill="none" stroke="#262626" stroke-width="2.25" stroke-linecap="round" stroke-linejoin="round"><circle cx="11" cy="11" r="8"/><path d="m21 21-4.300-4.300"/></svg>
<svg style="left:258.27px;top:800.56px" width="16.67" height="16.67" viewBox="0 0 24 24" fill="none" stroke="#0a0a0a" stroke-width="2.25" stroke-linecap="round" stroke-linejoin="round"><circle cx="12" cy="5" r="1"/><circle cx="12" cy="12" r="1"/><circle cx="12" cy="19" r="1"/></svg>
<svg style="left:344.17px;top:199.41px" width="16.67" height="16.67" viewBox="0 0 24 24" fill="none" stroke="#0a0a0a" stroke-width="2.25" stroke-linecap="round" stroke-linejoin="round"><rect width="18" height="18" x="3" y="3" rx="2"/><path d="M9 3v18"/></svg>
<div class="abs" style="left:382.500px;top:200px;width:1px;height:16px;background:#e5e5e5"></div>
<svg style="left:534.25px;top:290.45px" width="12.5" height="12.5" viewBox="0 0 24 24" fill="none" stroke="#0a0a0a" stroke-width="2.25" stroke-linecap="round" stroke-linejoin="round"><polyline points="22 7 13.5 15.5 8.5 10.5 2 17"/><polyline points="16 7 22 7 22 13"/></svg>
<svg style="left:848.35px;top:290.45px" width="12.5" height="12.5" viewBox="0 0 24 24" fill="none" stroke="#0a0a0a" stroke-width="2.25" stroke-linecap="round" stroke-linejoin="round"><polyline points="22 17 13.5 8.5 8.5 13.5 2 7"/><polyline points="16 17 22 17 22 11"/></svg>
<svg style="left:1139.75px;top:290.45px" width="12.5" height="12.5" viewBox="0 0 24 24" fill="none" stroke="#0a0a0a" stroke-width="2.25" stroke-linecap="round" stroke-linejoin="round"><polyline points="22 7 13.5 15.5 8.5 10.5 2 17"/><polyline points="16 7 22 7 22 13"/></svg>
<svg style="left:1446.25px;top:290.45px" width="12.5" height="12.5" viewBox="0 0 24 24" fill="none" stroke="#0a0a0a" stroke-width="2.25" stroke-linecap="round" stroke-linejoin="round"><polyline points="22 7 13.5 15.5 8.5 10.5 2 17"/><polyline points="16 7 22 7 22 13"/></svg>
<svg style="left:531.06px;top:374.97px" width="16.67" height="16.67" viewBox="0 0 24 24" fill="none" stroke="#0a0a0a" stroke-width="2.25" stroke-linecap="round" stroke-linejoin="round"><polyline points="22 7 13.5 15.5 8.5 10.5 2 17"/><polyline points="16 7 22 7 22 13"/></svg>
<svg style="left:824.66px;top:374.97px" width="16.67" height="16.67" viewBox="0 0 24 24" fill="none" stroke="#0a0a0a" stroke-width="2.25" stroke-linecap="round" stroke-linejoin="round"><polyline points="22 17 13.5 8.5 8.5 13.5 2 7"/><polyline points="16 17 22 17 22 11"/></svg>
<svg style="left:1120.96px;top:374.97px" width="16.67" height="16.67" viewBox="0 0 24 24" fill="none" stroke="#0a0a0a" stroke-width="2.25" stroke-linecap="round" stroke-linejoin="round"><polyline points="22 7 13.5 15.5 8.5 10.5 2 17"/><polyline points="16 7 22 7 22 13"/></svg>
<svg style="left:1474.37px;top:374.97px" width="16.67" height="16.67" viewBox="0 0 24 24" fill="none" stroke="#0a0a0a" stroke-width="2.25" stroke-linecap="round" stroke-linejoin="round"><polyline points="22 7 13.5 15.5 8.5 10.5 2 17"/><polyline points="16 7 22 7 22 13"/></svg>

<!-- chart -->
<svg style="left:0;top:0" width="1600" height="850" viewBox="0 0 1600 850">
<defs><linearGradient id="fillDesktop" x1="0" y1="0" x2="0" y2="1"><stop offset="5%" stop-color="#171717" stop-opacity="1"/><stop offset="95%" stop-color="#171717" stop-opacity=".1"/></linearGradient><linearGradient id="fillMobile" x1="0" y1="0" x2="0" y2="1"><stop offset="5%" stop-color="#171717" stop-opacity=".8"/><stop offset="95%" stop-color="#171717" stop-opacity=".1"/></linearGradient></defs>
<line x1="372.0" x2="1503.0" y1="601.0" y2="601.0" stroke="#f1f1f1" stroke-width="1"/>
<line x1="372.0" x2="1503.0" y1="655.6" y2="655.6" stroke="#f1f1f1" stroke-width="1"/>
<line x1="372.0" x2="1503.0" y1="710.2" y2="710.2" stroke="#f1f1f1" stroke-width="1"/>
<line x1="372.0" x2="1503.0" y1="764.9" y2="764.9" stroke="#f1f1f1" stroke-width="1"/>
<path d="M372.0,792.2C376.2,787.9,380.4,783.6,384.6,786.7C388.8,789.9,392.9,800.6,397.1,797.6C401.3,794.7,405.5,778.3,409.7,772.2C413.9,766.1,418.1,770.4,422.3,766.7C426.5,763.0,430.6,751.4,434.8,757.6C439.0,763.7,443.2,787.6,447.4,786.7C451.6,785.8,455.8,760.1,460.0,761.2C464.2,762.4,468.3,790.4,472.5,799.5C476.7,808.6,480.9,798.8,485.1,784.9C489.3,771.0,493.5,752.8,497.7,755.8C501.9,758.7,506.0,782.7,510.2,781.3C514.4,779.8,518.6,752.9,522.8,750.3C527.0,747.7,531.2,769.3,535.4,779.4C539.6,789.6,543.7,788.2,547.9,788.5C552.1,788.9,556.3,791.0,560.5,784.9C564.7,778.8,568.9,764.5,573.1,754.0C577.3,743.4,581.4,736.7,585.6,744.8C589.8,753.0,594.0,776.0,598.2,786.7C602.4,797.4,606.6,795.8,610.8,792.2C615.0,788.6,619.1,783.1,623.3,783.1C627.5,783.1,631.7,788.7,635.9,788.5C640.1,788.4,644.3,782.5,648.5,777.6C652.7,772.8,656.8,769.0,661.0,766.7C665.2,764.4,669.4,763.7,673.6,774.0C677.8,784.2,682.0,805.4,686.2,795.8C690.4,786.3,694.5,746.0,698.7,743.0C702.9,740.1,707.1,774.5,711.3,786.7C715.5,798.9,719.7,788.9,723.9,775.8C728.1,762.7,732.2,746.6,736.4,750.3C740.6,754.0,744.8,777.6,749.0,779.4C753.2,781.2,757.4,761.2,761.6,763.1C765.8,764.9,769.9,788.5,774.1,784.9C778.3,781.3,782.5,750.4,786.7,743.0C790.9,735.6,795.1,751.6,799.3,748.5C803.5,745.4,807.6,723.1,811.8,724.8C816.0,726.5,820.2,752.1,824.4,764.9C828.6,777.7,832.8,777.6,837.0,781.3C841.2,784.9,845.3,792.2,849.5,786.7C853.7,781.2,857.9,763.0,862.1,759.4C866.3,755.9,870.5,767.1,874.7,770.3C878.9,773.6,883.0,768.9,887.2,775.8C891.4,782.7,895.6,801.2,899.8,790.4C904.0,779.5,908.2,739.4,912.4,730.3C916.6,721.1,920.7,743.0,924.9,750.3C929.1,757.7,933.3,750.5,937.5,746.7C941.7,742.8,945.9,742.3,950.1,743.0C954.3,743.8,958.4,745.8,962.6,755.8C966.8,765.7,971.0,783.6,975.2,786.7C979.4,789.9,983.6,778.4,987.8,777.6C992.0,776.9,996.1,786.8,1000.3,794.0C1004.5,801.2,1008.7,805.5,1012.9,797.6C1017.1,789.8,1021.3,769.6,1025.5,766.7C1029.7,763.8,1033.8,778.0,1038.0,779.4C1042.2,780.9,1046.4,769.6,1050.6,774.0C1054.8,778.4,1059.0,798.5,1063.2,788.5C1067.4,778.6,1071.5,738.6,1075.7,735.7C1079.9,732.9,1084.1,767.3,1088.3,784.9C1092.5,802.5,1096.7,803.2,1100.9,795.8C1105.1,788.5,1109.2,773.1,1113.4,768.5C1117.6,763.9,1121.8,770.0,1126.0,777.6C1130.2,785.2,1134.4,794.3,1138.6,783.1C1142.8,771.9,1146.9,740.4,1151.1,744.8C1155.3,749.3,1159.5,789.7,1163.7,790.4C1167.9,791.0,1172.1,752.0,1176.3,750.3C1180.5,748.6,1184.6,784.3,1188.8,794.0C1193.0,803.7,1197.2,787.3,1201.4,774.0C1205.6,760.7,1209.8,750.5,1214.0,752.1C1218.2,753.8,1222.3,767.2,1226.5,761.2C1230.7,755.2,1234.9,729.7,1239.1,732.1C1243.3,734.5,1247.5,764.8,1251.7,783.1C1255.9,801.4,1260.0,807.7,1264.2,792.2C1268.4,776.7,1272.6,739.3,1276.8,743.0C1281.0,746.8,1285.2,791.6,1289.4,795.8C1293.6,800.1,1297.7,763.7,1301.9,750.3C1306.1,736.9,1310.3,746.3,1314.5,755.8C1318.7,765.2,1322.9,774.6,1327.1,763.1C1331.3,751.5,1335.4,718.9,1339.6,724.8C1343.8,730.8,1348.0,775.2,1352.2,788.5C1356.4,801.9,1360.6,784.0,1364.8,766.7C1369.0,749.3,1373.1,732.5,1377.3,737.6C1381.5,742.6,1385.7,769.7,1389.9,781.3C1394.1,792.8,1398.3,788.9,1402.5,770.3C1406.7,751.7,1410.8,718.5,1415.0,723.0C1419.2,727.5,1423.4,769.9,1427.6,786.7C1431.8,803.6,1436.0,795.0,1440.2,784.9C1444.4,774.8,1448.5,763.4,1452.7,750.3C1456.9,737.3,1461.1,722.6,1465.3,730.3C1469.5,737.9,1473.7,767.8,1477.9,783.1C1482.1,798.3,1486.2,798.9,1490.4,790.4C1494.6,781.9,1498.8,764.3,1503.0,746.7L1503.0,819.5L372.0,819.5Z" fill="url(#fillMobile)" fill-opacity=".6"/>
<path d="M372.0,792.2C376.2,787.9,380.4,783.6,384.6,786.7C388.8,789.9,392.9,800.6,397.1,797.6C401.3,794.7,405.5,778.3,409.7,772.2C413.9,766.1,418.1,770.4,422.3,766.7C426.5,763.0,430.6,751.4,434.8,757.6C439.0,763.7,443.2,787.6,447.4,786.7C451.6,785.8,455.8,760.1,460.0,761.2C464.2,762.4,468.3,790.4,472.5,799.5C476.7,808.6,480.9,798.8,485.1,784.9C489.3,771.0,493.5,752.8,497.7,755.8C501.9,758.7,506.0,782.7,510.2,781.3C514.4,779.8,518.6,752.9,522.8,750.3C527.0,747.7,531.2,769.3,535.4,779.4C539.6,789.6,543.7,788.2,547.9,788.5C552.1,788.9,556.3,791.0,560.5,784.9C564.7,778.8,568.9,764.5,573.1,754.0C577.3,743.4,581.4,736.7,585.6,744.8C589.8,753.0,594.0,776.0,598.2,786.7C602.4,797.4,606.6,795.8,610.8,792.2C615.0,788.6,619.1,783.1,623.3,783.1C627.5,783.1,631.7,788.7,635.9,788.5C640.1,788.4,644.3,782.5,648.5,777.6C652.7,772.8,656.8,769.0,661.0,766.7C665.2,764.4,669.4,763.7,673.6,774.0C677.8,784.2,682.0,805.4,686.2,795.8C690.4,786.3,694.5,746.0,698.7,743.0C702.9,740.1,707.1,774.5,711.3,786.7C715.5,798.9,719.7,788.9,723.9,775.8C728.1,762.7,732.2,746.6,736.4,750.3C740.6,754.0,744.8,777.6,749.0,779.4C753.2,781.2,757.4,761.2,761.6,763.1C765.8,764.9,769.9,788.5,774.1,784.9C778.3,781.3,782.5,750.4,786.7,743.0C790.9,735.6,795.1,751.6,799.3,748.5C803.5,745.4,807.6,723.1,811.8,724.8C816.0,726.5,820.2,752.1,824.4,764.9C828.6,777.7,832.8,777.6,837.0,781.3C841.2,784.9,845.3,792.2,849.5,786.7C853.7,781.2,857.9,763.0,862.1,759.4C866.3,755.9,870.5,767.1,874.7,770.3C878.9,773.6,883.0,768.9,887.2,775.8C891.4,782.7,895.6,801.2,899.8,790.4C904.0,779.5,908.2,739.4,912.4,730.3C916.6,721.1,920.7,743.0,924.9,750.3C929.1,757.7,933.3,750.5,937.5,746.7C941.7,742.8,945.9,742.3,950.1,743.0C954.3,743.8,958.4,745.8,962.6,755.8C966.8,765.7,971.0,783.6,975.2,786.7C979.4,789.9,983.6,778.4,987.8,777.6C992.0,776.9,996.1,786.8,1000.3,794.0C1004.5,801.2,1008.7,805.5,1012.9,797.6C1017.1,789.8,1021.3,769.6,1025.5,766.7C1029.7,763.8,1033.8,778.0,1038.0,779.4C1042.2,780.9,1046.4,769.6,1050.6,774.0C1054.8,778.4,1059.0,798.5,1063.2,788.5C1067.4,778.6,1071.5,738.6,1075.7,735.7C1079.9,732.9,1084.1,767.3,1088.3,784.9C1092.5,802.5,1096.7,803.2,1100.9,795.8C1105.1,788.5,1109.2,773.1,1113.4,768.5C1117.6,763.9,1121.8,770.0,1126.0,777.6C1130.2,785.2,1134.4,794.3,1138.6,783.1C1142.8,771.9,1146.9,740.4,1151.1,744.8C1155.3,749.3,1159.5,789.7,1163.7,790.4C1167.9,791.0,1172.1,752.0,1176.3,750.3C1180.5,748.6,1184.6,784.3,1188.8,794.0C1193.0,803.7,1197.2,787.3,1201.4,774.0C1205.6,760.7,1209.8,750.5,1214.0,752.1C1218.2,753.8,1222.3,767.2,1226.5,761.2C1230.7,755.2,1234.9,729.7,1239.1,732.1C1243.3,734.5,1247.5,764.8,1251.7,783.1C1255.9,801.4,1260.0,807.7,1264.2,792.2C1268.4,776.7,1272.6,739.3,1276.8,743.0C1281.0,746.8,1285.2,791.6,1289.4,795.8C1293.6,800.1,1297.7,763.7,1301.9,750.3C1306.1,736.9,1310.3,746.3,1314.5,755.8C1318.7,765.2,1322.9,774.6,1327.1,763.1C1331.3,751.5,1335.4,718.9,1339.6,724.8C1343.8,730.8,1348.0,775.2,1352.2,788.5C1356.4,801.9,1360.6,784.0,1364.8,766.7C1369.0,749.3,1373.1,732.5,1377.3,737.6C1381.5,742.6,1385.7,769.7,1389.9,781.3C1394.1,792.8,1398.3,788.9,1402.5,770.3C1406.7,751.7,1410.8,718.5,1415.0,723.0C1419.2,727.5,1423.4,769.9,1427.6,786.7C1431.8,803.6,1436.0,795.0,1440.2,784.9C1444.4,774.8,1448.5,763.4,1452.7,750.3C1456.9,737.3,1461.1,722.6,1465.3,730.3C1469.5,737.9,1473.7,767.8,1477.9,783.1C1482.1,798.3,1486.2,798.9,1490.4,790.4C1494.6,781.9,1498.8,764.3,1503.0,746.7" fill="none" stroke="#171717" stroke-width="1.05"/>
<path d="M372.0,751.8C376.2,758.3,380.4,764.8,384.6,769.1C388.8,773.3,392.9,775.2,397.1,767.2C401.3,759.3,405.5,741.5,409.7,728.1C413.9,714.6,418.1,705.5,422.3,698.8C426.5,692.0,430.6,687.7,434.8,702.8C439.0,717.9,443.2,752.4,447.4,742.1C451.6,731.9,455.8,676.9,460.0,686.8C464.2,696.6,468.3,771.3,472.5,788.7C476.7,806.2,480.9,766.4,485.1,737.4C489.3,708.4,493.5,690.2,497.7,696.2C501.9,702.2,506.0,732.4,510.2,728.1C514.4,723.8,518.6,685.0,522.8,688.0C527.0,691.1,531.2,735.9,535.4,754.5C539.6,773.1,543.7,765.3,547.9,766.7C552.1,768.1,556.3,778.6,560.5,759.8C564.7,740.9,568.9,692.7,573.1,672.7C577.3,652.8,581.4,661.1,585.6,678.6C589.8,696.1,594.0,722.8,598.2,742.5C602.4,762.2,606.6,774.9,610.8,776.0C615.0,777.0,619.1,766.3,623.3,758.1C627.5,749.9,631.7,744.2,635.9,747.8C640.1,751.3,644.3,764.1,648.5,752.5C652.7,740.9,656.8,705.0,661.0,696.2C665.2,687.4,669.4,705.7,673.6,734.8C677.8,763.9,682.0,803.8,686.2,782.2C690.4,760.6,694.5,677.4,698.7,673.3C702.9,669.1,707.1,744.0,711.3,764.5C715.5,785.0,719.7,751.3,723.9,718.4C728.1,685.6,732.2,653.7,736.4,667.6C740.6,681.6,744.8,741.6,749.0,749.4C753.2,757.2,757.4,713.0,761.6,709.7C765.8,706.4,769.9,744.0,774.1,739.9C778.3,735.9,782.5,690.1,786.7,672.9C790.9,655.7,795.1,667.1,799.3,660.9C803.5,654.7,807.6,631.0,811.8,634.1C816.0,637.3,820.2,667.3,824.4,694.2C828.6,721.1,832.8,745.0,837.0,754.1C841.2,763.3,845.3,757.8,849.5,745.4C853.7,733.0,857.9,713.6,862.1,706.1C866.3,698.5,870.5,702.7,874.7,709.3C878.9,716.0,883.0,725.0,887.2,739.9C891.4,754.9,895.6,775.7,899.8,754.5C904.0,733.3,908.2,670.0,912.4,648.7C916.6,627.4,920.7,648.0,924.9,664.2C929.1,680.4,933.3,692.1,937.5,685.1C941.7,678.2,945.9,652.5,950.1,652.2C954.3,651.8,958.4,676.7,962.6,698.4C966.8,720.2,971.0,738.8,975.2,743.9C979.4,749.1,983.6,740.9,987.8,745.4C992.0,749.9,996.1,767.2,1000.3,779.1C1004.5,791.0,1008.7,797.5,1012.9,782.9C1017.1,768.3,1021.3,732.6,1025.5,720.8C1029.7,709.1,1033.8,721.3,1038.0,725.9C1042.2,730.5,1046.4,727.4,1050.6,737.4C1054.8,747.4,1059.0,770.4,1063.2,749.8C1067.4,729.1,1071.5,664.9,1075.7,659.3C1079.9,653.6,1084.1,706.7,1088.3,742.5C1092.5,778.3,1096.7,796.9,1100.9,781.6C1105.1,766.3,1109.2,717.2,1113.4,706.6C1117.6,696.0,1121.8,724.1,1126.0,745.2C1130.2,766.3,1134.4,780.6,1138.6,750.7C1142.8,720.8,1146.9,646.7,1151.1,659.3C1155.3,671.8,1159.5,771.1,1163.7,771.6C1167.9,772.1,1172.1,673.9,1176.3,670.4C1180.5,666.8,1184.6,757.9,1188.8,778.0C1193.0,798.1,1197.2,747.3,1201.4,720.4C1205.6,693.6,1209.8,690.6,1214.0,693.3C1218.2,696.1,1222.3,704.5,1226.5,691.1C1230.7,677.7,1234.9,642.4,1239.1,652.3C1243.3,662.3,1247.5,717.4,1251.7,754.9C1255.9,792.3,1260.0,812.2,1264.2,775.4C1268.4,738.7,1272.6,645.2,1276.8,653.4C1281.0,661.6,1285.2,771.5,1289.4,781.1C1293.6,790.7,1297.7,700.1,1301.9,672.7C1306.1,645.3,1310.3,681.1,1314.5,699.9C1318.7,718.6,1322.9,720.5,1327.1,695.5C1331.3,670.6,1335.4,618.8,1339.6,638.3C1343.8,657.8,1348.0,748.5,1352.2,769.1C1356.4,789.7,1360.6,740.2,1364.8,704.6C1369.0,669.0,1373.1,647.3,1377.3,663.3C1381.5,679.3,1385.7,733.1,1389.9,750.5C1394.1,767.9,1398.3,749.0,1402.5,712.6C1406.7,676.2,1410.8,622.4,1415.0,635.6C1419.2,648.8,1423.4,728.9,1427.6,762.7C1431.8,796.5,1436.0,783.9,1440.2,759.2C1444.4,734.6,1448.5,697.8,1452.7,671.3C1456.9,644.8,1461.1,628.5,1465.3,648.7C1469.5,668.9,1473.7,725.4,1477.9,756.0C1482.1,786.5,1486.2,791.0,1490.4,771.6C1494.6,752.2,1498.8,708.8,1503.0,665.5L1503.0,746.7C1498.8,764.3,1494.6,781.9,1490.4,790.4C1486.2,798.9,1482.1,798.3,1477.9,783.1C1473.7,767.8,1469.5,737.9,1465.3,730.3C1461.1,722.6,1456.9,737.3,1452.7,750.3C1448.5,763.4,1444.4,774.8,1440.2,784.9C1436.0,795.0,1431.8,803.6,1427.6,786.7C1423.4,769.9,1419.2,727.5,1415.0,723.0C1410.8,718.5,1406.7,751.7,1402.5,770.3C1398.3,788.9,1394.1,792.8,1389.9,781.3C1385.7,769.7,1381.5,742.6,1377.3,737.6C1373.1,732.5,1369.0,749.3,1364.8,766.7C1360.6,784.0,1356.4,801.9,1352.2,788.5C1348.0,775.2,1343.8,730.8,1339.6,724.8C1335.4,718.9,1331.3,751.5,1327.1,763.1C1322.9,774.6,1318.7,765.2,1314.5,755.8C1310.3,746.3,1306.1,736.9,1301.9,750.3C1297.7,763.7,1293.6,800.1,1289.4,795.8C1285.2,791.6,1281.0,746.8,1276.8,743.0C1272.6,739.3,1268.4,776.7,1264.2,792.2C1260.0,807.7,1255.9,801.4,1251.7,783.1C1247.5,764.8,1243.3,734.5,1239.1,732.1C1234.9,729.7,1230.7,755.2,1226.5,761.2C1222.3,767.2,1218.2,753.8,1214.0,752.1C1209.8,750.5,1205.6,760.7,1201.4,774.0C1197.2,787.3,1193.0,803.7,1188.8,794.0C1184.6,784.3,1180.5,748.6,1176.3,750.3C1172.1,752.0,1167.9,791.0,1163.7,790.4C1159.5,789.7,1155.3,749.3,1151.1,744.8C1146.9,740.4,1142.8,771.9,1138.6,783.1C1134.4,794.3,1130.2,785.2,1126.0,777.6C1121.8,770.0,1117.6,763.9,1113.4,768.5C1109.2,773.1,1105.1,788.5,1100.9,795.8C1096.7,803.2,1092.5,802.5,1088.3,784.9C1084.1,767.3,1079.9,732.9,1075.7,735.7C1071.5,738.6,1067.4,778.6,1063.2,788.5C1059.0,798.5,1054.8,778.4,1050.6,774.0C1046.4,769.6,1042.2,780.9,1038.0,779.4C1033.8,778.0,1029.7,763.8,1025.5,766.7C1021.3,769.6,1017.1,789.8,1012.9,797.6C1008.7,805.5,1004.5,801.2,1000.3,794.0C996.1,786.8,992.0,776.9,987.8,777.6C983.6,778.4,979.4,789.9,975.2,786.7C971.0,783.6,966.8,765.7,962.6,755.8C958.4,745.8,954.3,743.8,950.1,743.0C945.9,742.3,941.7,742.8,937.5,746.7C933.3,750.5,929.1,757.7,924.9,750.3C920.7,743.0,916.6,721.1,912.4,730.3C908.2,739.4,904.0,779.5,899.8,790.4C895.6,801.2,891.4,782.7,887.2,775.8C883.0,768.9,878.9,773.6,874.7,770.3C870.5,767.1,866.3,755.9,862.1,759.4C857.9,763.0,853.7,781.2,849.5,786.7C845.3,792.2,841.2,784.9,837.0,781.3C832.8,777.6,828.6,777.7,824.4,764.9C820.2,752.1,816.0,726.5,811.8,724.8C807.6,723.1,803.5,745.4,799.3,748.5C795.1,751.6,790.9,735.6,786.7,743.0C782.5,750.4,778.3,781.3,774.1,784.9C769.9,788.5,765.8,764.9,761.6,763.1C757.4,761.2,753.2,781.2,749.0,779.4C744.8,777.6,740.6,754.0,736.4,750.3C732.2,746.6,728.1,762.7,723.9,775.8C719.7,788.9,715.5,798.9,711.3,786.7C707.1,774.5,702.9,740.1,698.7,743.0C694.5,746.0,690.4,786.3,686.2,795.8C682.0,805.4,677.8,784.2,673.6,774.0C669.4,763.7,665.2,764.4,661.0,766.7C656.8,769.0,652.7,772.8,648.5,777.6C644.3,782.5,640.1,788.4,635.9,788.5C631.7,788.7,627.5,783.1,623.3,783.1C619.1,783.1,615.0,788.6,610.8,792.2C606.6,795.8,602.4,797.4,598.2,786.7C594.0,776.0,589.8,753.0,585.6,744.8C581.4,736.7,577.3,743.4,573.1,754.0C568.9,764.5,564.7,778.8,560.5,784.9C556.3,791.0,552.1,788.9,547.9,788.5C543.7,788.2,539.6,789.6,535.4,779.4C531.2,769.3,527.0,747.7,522.8,750.3C518.6,752.9,514.4,779.8,510.2,781.3C506.0,782.7,501.9,758.7,497.7,755.8C493.5,752.8,489.3,771.0,485.1,784.9C480.9,798.8,476.7,808.6,472.5,799.5C468.3,790.4,464.2,762.4,460.0,761.2C455.8,760.1,451.6,785.8,447.4,786.7C443.2,787.6,439.0,763.7,434.8,757.6C430.6,751.4,426.5,763.0,422.3,766.7C418.1,770.4,413.9,766.1,409.7,772.2C405.5,778.3,401.3,794.7,397.1,797.6C392.9,800.6,388.8,789.9,384.6,786.7C380.4,783.6,376.2,787.9,372.0,792.2Z" fill="url(#fillDesktop)" fill-opacity=".6"/>
<path d="M372.0,751.8C376.2,758.3,380.4,764.8,384.6,769.1C388.8,773.3,392.9,775.2,397.1,767.2C401.3,759.3,405.5,741.5,409.7,728.1C413.9,714.6,418.1,705.5,422.3,698.8C426.5,692.0,430.6,687.7,434.8,702.8C439.0,717.9,443.2,752.4,447.4,742.1C451.6,731.9,455.8,676.9,460.0,686.8C464.2,696.6,468.3,771.3,472.5,788.7C476.7,806.2,480.9,766.4,485.1,737.4C489.3,708.4,493.5,690.2,497.7,696.2C501.9,702.2,506.0,732.4,510.2,728.1C514.4,723.8,518.6,685.0,522.8,688.0C527.0,691.1,531.2,735.9,535.4,754.5C539.6,773.1,543.7,765.3,547.9,766.7C552.1,768.1,556.3,778.6,560.5,759.8C564.7,740.9,568.9,692.7,573.1,672.7C577.3,652.8,581.4,661.1,585.6,678.6C589.8,696.1,594.0,722.8,598.2,742.5C602.4,762.2,606.6,774.9,610.8,776.0C615.0,777.0,619.1,766.3,623.3,758.1C627.5,749.9,631.7,744.2,635.9,747.8C640.1,751.3,644.3,764.1,648.5,752.5C652.7,740.9,656.8,705.0,661.0,696.2C665.2,687.4,669.4,705.7,673.6,734.8C677.8,763.9,682.0,803.8,686.2,782.2C690.4,760.6,694.5,677.4,698.7,673.3C702.9,669.1,707.1,744.0,711.3,764.5C715.5,785.0,719.7,751.3,723.9,718.4C728.1,685.6,732.2,653.7,736.4,667.6C740.6,681.6,744.8,741.6,749.0,749.4C753.2,757.2,757.4,713.0,761.6,709.7C765.8,706.4,769.9,744.0,774.1,739.9C778.3,735.9,782.5,690.1,786.7,672.9C790.9,655.7,795.1,667.1,799.3,660.9C803.5,654.7,807.6,631.0,811.8,634.1C816.0,637.3,820.2,667.3,824.4,694.2C828.6,721.1,832.8,745.0,837.0,754.1C841.2,763.3,845.3,757.8,849.5,745.4C853.7,733.0,857.9,713.6,862.1,706.1C866.3,698.5,870.5,702.7,874.7,709.3C878.9,716.0,883.0,725.0,887.2,739.9C891.4,754.9,895.6,775.7,899.8,754.5C904.0,733.3,908.2,670.0,912.4,648.7C916.6,627.4,920.7,648.0,924.9,664.2C929.1,680.4,933.3,692.1,937.5,685.1C941.7,678.2,945.9,652.5,950.1,652.2C954.3,651.8,958.4,676.7,962.6,698.4C966.8,720.2,971.0,738.8,975.2,743.9C979.4,749.1,983.6,740.9,987.8,745.4C992.0,749.9,996.1,767.2,1000.3,779.1C1004.5,791.0,1008.7,797.5,1012.9,782.9C1017.1,768.3,1021.3,732.6,1025.5,720.8C1029.7,709.1,1033.8,721.3,1038.0,725.9C1042.2,730.5,1046.4,727.4,1050.6,737.4C1054.8,747.4,1059.0,770.4,1063.2,749.8C1067.4,729.1,1071.5,664.9,1075.7,659.3C1079.9,653.6,1084.1,706.7,1088.3,742.5C1092.5,778.3,1096.7,796.9,1100.9,781.6C1105.1,766.3,1109.2,717.2,1113.4,706.6C1117.6,696.0,1121.8,724.1,1126.0,745.2C1130.2,766.3,1134.4,780.6,1138.6,750.7C1142.8,720.8,1146.9,646.7,1151.1,659.3C1155.3,671.8,1159.5,771.1,1163.7,771.6C1167.9,772.1,1172.1,673.9,1176.3,670.4C1180.5,666.8,1184.6,757.9,1188.8,778.0C1193.0,798.1,1197.2,747.3,1201.4,720.4C1205.6,693.6,1209.8,690.6,1214.0,693.3C1218.2,696.1,1222.3,704.5,1226.5,691.1C1230.7,677.7,1234.9,642.4,1239.1,652.3C1243.3,662.3,1247.5,717.4,1251.7,754.9C1255.9,792.3,1260.0,812.2,1264.2,775.4C1268.4,738.7,1272.6,645.2,1276.8,653.4C1281.0,661.6,1285.2,771.5,1289.4,781.1C1293.6,790.7,1297.7,700.1,1301.9,672.7C1306.1,645.3,1310.3,681.1,1314.5,699.9C1318.7,718.6,1322.9,720.5,1327.1,695.5C1331.3,670.6,1335.4,618.8,1339.6,638.3C1343.8,657.8,1348.0,748.5,1352.2,769.1C1356.4,789.7,1360.6,740.2,1364.8,704.6C1369.0,669.0,1373.1,647.3,1377.3,663.3C1381.5,679.3,1385.7,733.1,1389.9,750.5C1394.1,767.9,1398.3,749.0,1402.5,712.6C1406.7,676.2,1410.8,622.4,1415.0,635.6C1419.2,648.8,1423.4,728.9,1427.6,762.7C1431.8,796.5,1436.0,783.9,1440.2,759.2C1444.4,734.6,1448.5,697.8,1452.7,671.3C1456.9,644.8,1461.1,628.5,1465.3,648.7C1469.5,668.9,1473.7,725.4,1477.9,756.0C1482.1,786.5,1486.2,791.0,1490.4,771.6C1494.6,752.2,1498.8,708.8,1503.0,665.5" fill="none" stroke="#171717" stroke-width="1.05"/>
</svg>
</body>
</html>
